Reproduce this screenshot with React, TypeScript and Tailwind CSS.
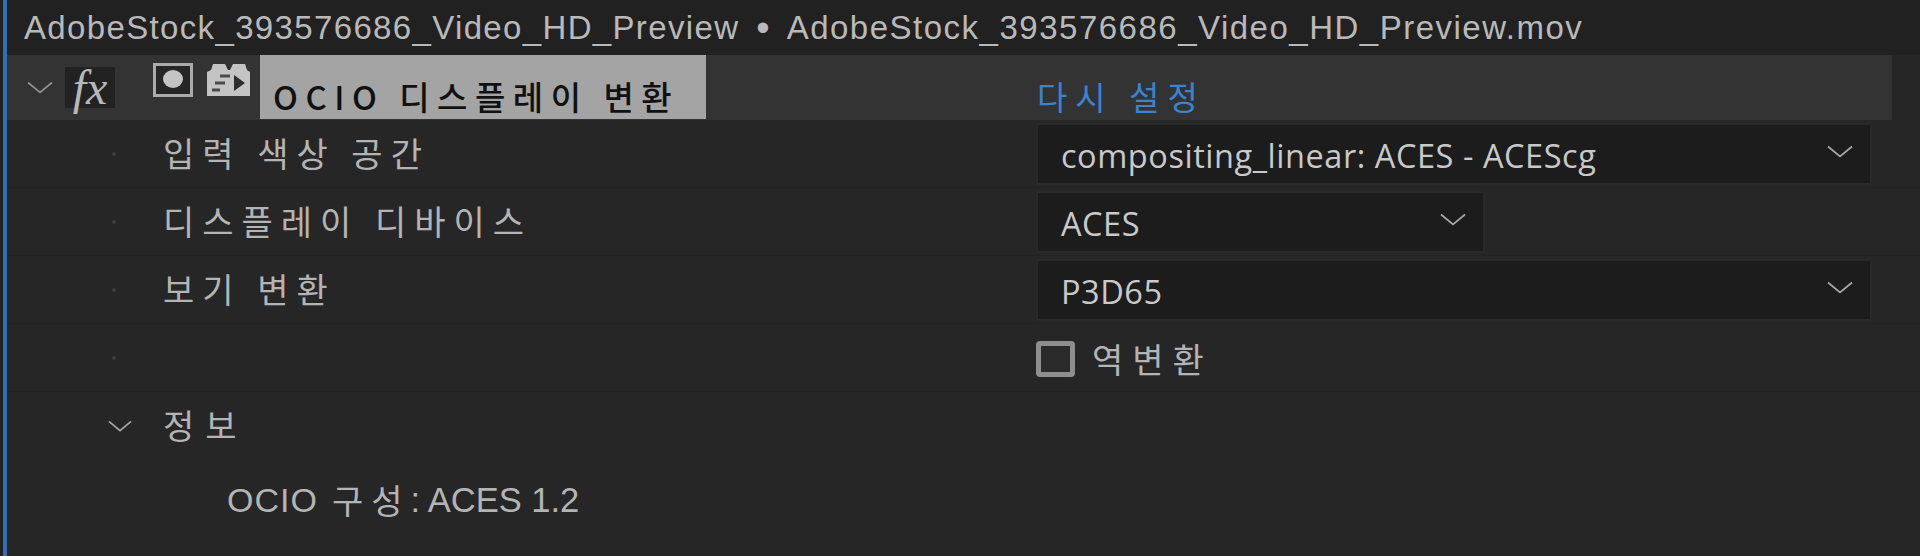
const kr = "font-['Noto_Sans_CJK_KR',sans-serif]";

function Chevron({ className }: { className: string }) {
  return (
    <svg viewBox="0 0 26 13" fill="none" stroke="currentColor" strokeWidth="1.7" className={className}>
      <path d="M1 1.5 13 11.5 25 1.5" />
    </svg>
  );
}

function Select({ value, short }: { value: string; short?: boolean }) {
  return (
    <div
      className={`flex h-[62px] items-center justify-between border-2 border-[#292929] bg-[#1c1c1c] pl-[23px] pr-[17px] ${short ? "w-[449px]" : "w-[836px]"}`}
    >
      <span className="pt-[6px] font-['Open_Sans',sans-serif] text-[32.5px] leading-none tracking-[0.55px] text-[#c9c9c9]">
        {value}
      </span>
      <Chevron className="mb-[4px] h-[13px] w-[26px] text-[#a8a8a8]" />
    </div>
  );
}

function Row({ label, children }: { label?: string; children: React.ReactNode }) {
  return (
    <div className="flex h-[68px] items-center border-b border-[#232323]">
      <div className="flex w-[1029px] items-center pl-[105px]">
        <div className="h-1 w-1 rounded-full bg-[#3d3d3d]" />
        {label && (
          <span className={`ml-[47px] mb-[2px] text-[34px] leading-none tracking-[8px] text-[#b4b4b4] ${kr}`}>{label}</span>
        )}
      </div>
      {children}
    </div>
  );
}

export default function App() {
  return (
    <div className="h-[556px] w-[1920px] overflow-hidden bg-[#212121] pl-[3px]">
      <div className="h-full border-l-4 border-[#2f6fb5] bg-[#262626]">
        <div className="flex h-[55px] items-center bg-[#212121] pl-[17px] font-['Liberation_Sans',sans-serif] text-[33px] leading-none whitespace-nowrap text-[#b9b9b9]">
          <span className="tracking-[1.35px]">AdobeStock_393576686_Video_HD_Preview</span>
          <span className="mx-[17px] text-[38px]">•</span>
          <span className="tracking-[1.5px]">AdobeStock_393576686_Video_HD_Preview.mov</span>
        </div>

        <div className="flex h-[65px] w-[1885px] bg-[#333333]">
          <div className="flex w-[253px] items-center">
            <Chevron className="ml-[20px] h-[13px] w-[26px] text-[#8f8f8f]" />
            <div className="ml-[12px] flex h-[41px] w-[50px] items-center justify-center bg-[#222222] font-['Liberation_Serif',serif] text-[48px] italic leading-none text-[#b8b8b8]">
              fx
            </div>
            <svg viewBox="0 0 40 34" className="ml-[38px] mb-[16px] h-[34px] w-[40px]">
              <rect x="1.5" y="1.5" width="37" height="31" fill="#262626" stroke="#ababab" strokeWidth="3" />
              <ellipse cx="20" cy="16" rx="10" ry="9" fill="#c4c4c4" />
            </svg>
            <svg viewBox="0 0 43 33" className="ml-[14px] mb-[16px] h-[33px] w-[43px]">
              <path d="M0 9 4 7 6 1h12l3 6h2l3-6h12l2 6 3 2v24H0z" fill="#c4c4c4" />
              <path d="M27 12 38 20 27 28z" fill="#2c2c2c" />
              <path d="M13 13h10M8 20h10M5 27h8" stroke="#4a4a4a" strokeWidth="3" />
            </svg>
          </div>
          <div className="flex h-[64px] w-[446px] items-end bg-[#a4a4a4] pb-[5px] pl-[13px]">
            <span className={`text-[33px] font-medium leading-[36px] tracking-[7.5px] whitespace-nowrap text-[#111111] ${kr}`}>
              OCIO 디스플레이 변환
            </span>
          </div>
          <span className={`ml-[331px] self-end pb-[6px] text-[33px] leading-[36px] tracking-[8px] whitespace-nowrap text-[#3a84cf] ${kr}`}>
            다시 설정
          </span>
        </div>

        <Row label="입력 색상 공간">
          <Select value="compositing_linear: ACES - ACEScg" />
        </Row>
        <Row label="디스플레이 디바이스">
          <Select value="ACES" short />
        </Row>
        <Row label="보기 변환">
          <Select value="P3D65" />
        </Row>
        <Row>
          <div className="flex items-center pt-[2px]">
            <div className="h-[36px] w-[39px] rounded-[4px] border-[5px] border-[#8e8e8e] bg-[#2a2a2a]" />
            <span className={`ml-[17px] text-[34px] leading-none tracking-[9px] text-[#b4b4b4] ${kr}`}>역변환</span>
          </div>
        </Row>

        <div className="flex h-[68px] items-center pl-[101px]">
          <Chevron className="h-[12px] w-[24px] text-[#a8a8a8]" />
          <span className={`ml-[31px] mb-[2px] text-[34px] leading-none tracking-[11px] text-[#b4b4b4] ${kr}`}>정보</span>
        </div>
        <div className="mt-[22px] flex h-[36px] items-center pl-[220px] whitespace-nowrap text-[#b4b4b4]">
          <span className="font-['Liberation_Sans',sans-serif] text-[34px] leading-none tracking-[1px]">OCIO</span>
          <span className={`ml-[14px] text-[34px] leading-none tracking-[8px] ${kr}`}>구성</span>
          <span className="font-['Liberation_Sans',sans-serif] text-[34.5px] leading-none">: ACES 1.2</span>
        </div>
      </div>
    </div>
  );
}
